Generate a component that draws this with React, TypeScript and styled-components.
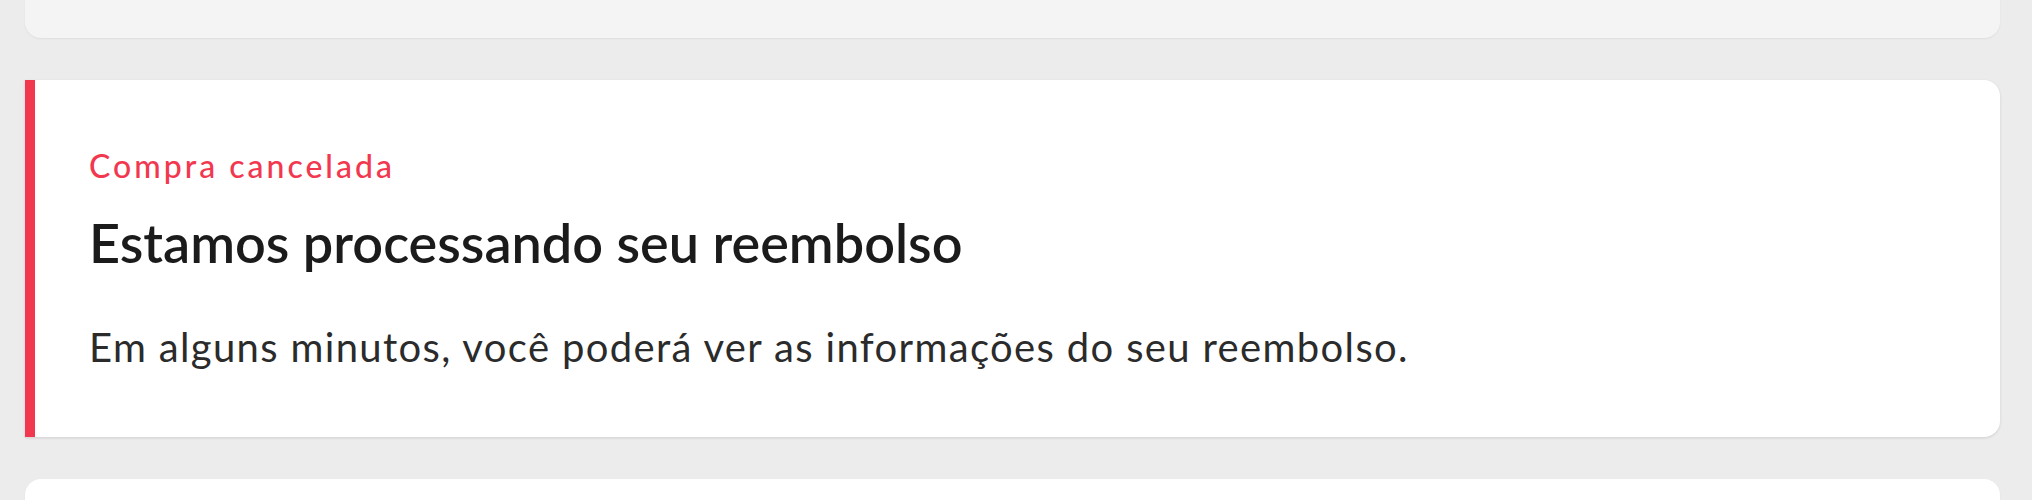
import React from 'react';
import styled, { createGlobalStyle } from 'styled-components';

const GlobalStyle = createGlobalStyle`
  html, body {
    margin: 0;
    padding: 0;
    background: #ececec;
  }
  body {
    font-family: Lato, "Open Sans", Arial, sans-serif;
    -webkit-font-smoothing: antialiased;
  }
`;

const Page = styled.main`
  display: flex;
  flex-direction: column;
  gap: 42px;
  padding: 0 32px 0 25px;
`;

const GhostCard = styled.div<{ $tone: string; $cut: 'top' | 'bottom' }>`
  height: 38px;
  background: ${p => p.$tone};
  border-radius: ${p => (p.$cut === 'top' ? '0 0 16px 16px' : '16px 16px 0 0')};
  box-shadow: 0 1px 2px rgba(0, 0, 0, 0.06);
`;

const StatusCard = styled.section<{ $accent: string }>`
  box-sizing: border-box;
  height: 357px;
  background: #ffffff;
  border-left: 10px solid ${p => p.$accent};
  border-radius: 0 16px 16px 0;
  box-shadow: 0 1px 3px rgba(0, 0, 0, 0.12);
  padding: 67px 40px 0 54px;
  display: flex;
  flex-direction: column;
`;

const Label = styled.span<{ $accent: string }>`
  font-size: 32px;
  font-weight: 500;
  line-height: 38px;
  letter-spacing: 3px;
  color: ${p => p.$accent};
`;

const Title = styled.h2`
  margin: 26px 0 0;
  font-size: 54px;
  font-weight: 600;
  line-height: 64px;
  color: #1b1b1b;
`;

const Body = styled.p`
  margin: 48px 0 0;
  font-size: 40px;
  font-weight: 400;
  line-height: 48px;
  letter-spacing: 1.35px;
  color: #2b2b2b;
`;

const ACCENT = '#f2384f';

export default function App() {
  return (
    <>
      <GlobalStyle />
      <Page>
        <GhostCard $tone="#f4f4f4" $cut="top" />
        <StatusCard $accent={ACCENT}>
          <Label $accent={ACCENT}>Compra cancelada</Label>
          <Title>Estamos processando seu reembolso</Title>
          <Body>Em alguns minutos, você poderá ver as informações do seu reembolso.</Body>
        </StatusCard>
        <GhostCard $tone="#ffffff" $cut="bottom" />
      </Page>
    </>
  );
}
